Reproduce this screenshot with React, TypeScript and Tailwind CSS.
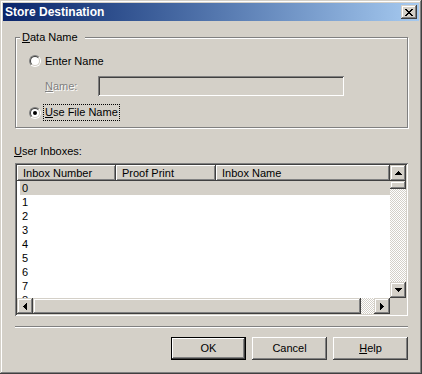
import React from "react";

const raisedBtn =
  "bg-[#d4d0c8] shadow-[inset_-1px_-1px_#404040,inset_1px_1px_#d4d0c8,inset_-2px_-2px_#808080,inset_2px_2px_#ffffff]";

function Radio({ checked }: { checked?: boolean }) {
  return (
    <div className="w-[12px] h-[12px] shrink-0 rounded-full border border-t-[#808080] border-l-[#808080] border-b-white border-r-white">
      <div className="w-full h-full rounded-full border border-t-[#404040] border-l-[#404040] border-b-[#d4d0c8] border-r-[#d4d0c8] bg-white flex items-center justify-center">
        {checked && <div className="w-[4px] h-[4px] rounded-full bg-black" />}
      </div>
    </div>
  );
}

function CloseGlyph() {
  return (
    <svg width="8" height="7" viewBox="0 0 8 7" shapeRendering="crispEdges">
      <path
        fill="#000"
        d="M0 0h2v1h-2zM6 0h2v1h-2zM1 1h2v1h-2zM5 1h2v1h-2zM2 2h4v1h-4zM3 3h2v1h-2zM2 4h4v1h-4zM1 5h2v1h-2zM5 5h2v1h-2zM0 6h2v1h-2zM6 6h2v1h-2z"
      />
    </svg>
  );
}

function ArrowUp() {
  return (
    <svg width="7" height="4" viewBox="0 0 7 4" shapeRendering="crispEdges">
      <path fill="#000" d="M3 0h1v1h-1zM2 1h3v1h-3zM1 2h5v1h-5zM0 3h7v1h-7z" />
    </svg>
  );
}
function ArrowDown() {
  return (
    <svg width="7" height="4" viewBox="0 0 7 4" shapeRendering="crispEdges">
      <path fill="#000" d="M0 0h7v1h-7zM1 1h5v1h-5zM2 2h3v1h-3zM3 3h1v1h-1z" />
    </svg>
  );
}
function ArrowLeft() {
  return (
    <svg width="4" height="7" viewBox="0 0 4 7" shapeRendering="crispEdges">
      <path fill="#000" d="M0 3h1v1h-1zM1 2h1v3h-1zM2 1h1v5h-1zM3 0h1v7h-1z" />
    </svg>
  );
}
function ArrowRight() {
  return (
    <svg width="4" height="7" viewBox="0 0 4 7" shapeRendering="crispEdges">
      <path fill="#000" d="M0 0h1v7h-1zM1 1h1v5h-1zM2 2h1v3h-1zM3 3h1v1h-1z" />
    </svg>
  );
}

const dither =
  "bg-[repeating-conic-gradient(#d4d0c8_0%_25%,#ffffff_0%_50%)] bg-[length:2px_2px]";

function HeaderCell({ label, className }: { label: string; className: string }) {
  return (
    <div
      className={
        "h-full flex items-center pl-[6px] bg-[#d4d0c8] shadow-[inset_-1px_-1px_#404040,inset_1px_1px_#ffffff,inset_-2px_-2px_#808080] whitespace-nowrap overflow-hidden " +
        className
      }
    >
      {label}
    </div>
  );
}

function PushButton({
  children,
  isDefault,
}: {
  children: React.ReactNode;
  isDefault?: boolean;
}) {
  return (
    <div
      className={
        "w-[75px] h-[23px] flex items-center justify-center bg-[#d4d0c8] " +
        (isDefault
          ? "border border-black shadow-[inset_-1px_-1px_#404040,inset_1px_1px_#ffffff,inset_-2px_-2px_#808080]"
          : "shadow-[inset_-1px_-1px_#404040,inset_1px_1px_#ffffff,inset_-2px_-2px_#808080]")
      }
    >
      {children}
    </div>
  );
}

export default function App() {
  const rows = [0, 1, 2, 3, 4, 5, 6, 7, 8];
  return (
    <div className="w-[422px] h-[374px] bg-[#d4d0c8] p-[3px] flex flex-col shadow-[inset_-1px_-1px_#404040,inset_1px_1px_#d4d0c8,inset_-2px_-2px_#808080,inset_2px_2px_#ffffff] font-['Liberation_Sans',Arial,sans-serif] text-[11px] leading-[13px] text-black select-none">
      {/* Title bar */}
      <div className="h-[18px] shrink-0 flex items-center bg-linear-to-r from-[#0a246a] to-[#a6caf0] pl-[2px] pr-[2px]">
        <span className="flex-1 text-white font-bold text-[12px] leading-[14px]">
          Store Destination
        </span>
        <div className={"w-[16px] h-[14px] flex items-center justify-center " + raisedBtn}>
          <CloseGlyph />
        </div>
      </div>

      {/* Body */}
      <div className="flex-1 flex flex-col pl-[12px] pr-[11px]">
        {/* Group box */}
        <div className="relative mt-[16px] h-[91px] border border-[#808080] shadow-[1px_1px_0_#ffffff,inset_1px_1px_0_#ffffff] pl-[13px] flex flex-col">
          <div className="absolute left-[4px] -top-[7px] bg-[#d4d0c8] pl-[2px] pr-[7px]">
            <span className="underline">D</span>ata Name
          </div>
          <div className="mt-[16px] h-[14px] flex items-center gap-[4px]">
            <Radio />
            <span>Enter Name</span>
          </div>
          <div className="mt-[8px] h-[20px] flex items-center pl-[16px]">
            <span className="w-[53px] text-[#808080] [text-shadow:1px_1px_0_#ffffff]">
              <span className="underline">N</span>ame:
            </span>
            <div className="w-[246px] h-[20px] bg-[#d4d0c8] shadow-[inset_1px_1px_#808080,inset_-1px_-1px_#ffffff,inset_2px_2px_#404040,inset_-2px_-2px_#d4d0c8]" />
          </div>
          <div className="mt-[8px] h-[17px] flex items-center gap-[2px]">
            <Radio checked />
            <span className="h-[17px] flex items-center border border-dotted border-black px-[1px]">
              <span className="underline">U</span>se File Name
            </span>
          </div>
        </div>

        {/* User Inboxes label */}
        <div className="mt-[17px] h-[13px] -ml-[1px]">
          <span className="underline">U</span>ser Inboxes:
        </div>

        {/* List view */}
        <div className="mt-[5px] h-[153px] p-[2px] bg-white shadow-[inset_1px_1px_#808080,inset_-1px_-1px_#ffffff,inset_2px_2px_#404040,inset_-2px_-2px_#d4d0c8] flex flex-col">
          <div className="flex-1 flex min-h-0">
            <div className="flex-1 flex flex-col min-w-0">
              <div className="h-[16px] shrink-0 flex">
                <HeaderCell label="Inbox Number" className="w-[99px] shrink-0" />
                <HeaderCell label="Proof Print" className="w-[100px] shrink-0" />
                <HeaderCell label="Inbox Name" className="flex-1" />
              </div>
              <div className="flex-1 overflow-hidden bg-white">
                {rows.map((r) => (
                  <div
                    key={r}
                    className={
                      "h-[14px] ml-[3px] pl-[2px] flex items-center " +
                      (r === 0 ? "bg-[#d4d0c8]" : "")
                    }
                  >
                    {r}
                  </div>
                ))}
              </div>
            </div>
            {/* Vertical scrollbar */}
            <div className="w-[16px] shrink-0 flex flex-col">
              <div className={"h-[16px] flex items-center justify-center " + raisedBtn}>
                <ArrowUp />
              </div>
              <div className={"h-[8px] " + raisedBtn} />
              <div className={"flex-1 " + dither} />
              <div className={"h-[16px] flex items-center justify-center " + raisedBtn}>
                <ArrowDown />
              </div>
            </div>
          </div>
          {/* Horizontal scrollbar */}
          <div className="h-[16px] shrink-0 flex">
            <div className="flex-1 flex">
              <div className={"w-[16px] flex items-center justify-center " + raisedBtn}>
                <ArrowLeft />
              </div>
              <div className={"w-[328px] " + raisedBtn} />
              <div className={"flex-1 " + dither} />
              <div className={"w-[16px] flex items-center justify-center " + raisedBtn}>
                <ArrowRight />
              </div>
            </div>
            <div className="w-[16px] bg-[#d4d0c8]" />
          </div>
        </div>

        {/* Separator */}
        <div className="mt-[10px] h-[2px] border-t border-t-[#808080] border-b border-b-white" />

        {/* Buttons */}
        <div className="mt-[9px] flex justify-end gap-[6px]">
          <PushButton isDefault>OK</PushButton>
          <PushButton>Cancel</PushButton>
          <PushButton>
            <span>
              <span className="underline">H</span>elp
            </span>
          </PushButton>
        </div>
      </div>
    </div>
  );
}
